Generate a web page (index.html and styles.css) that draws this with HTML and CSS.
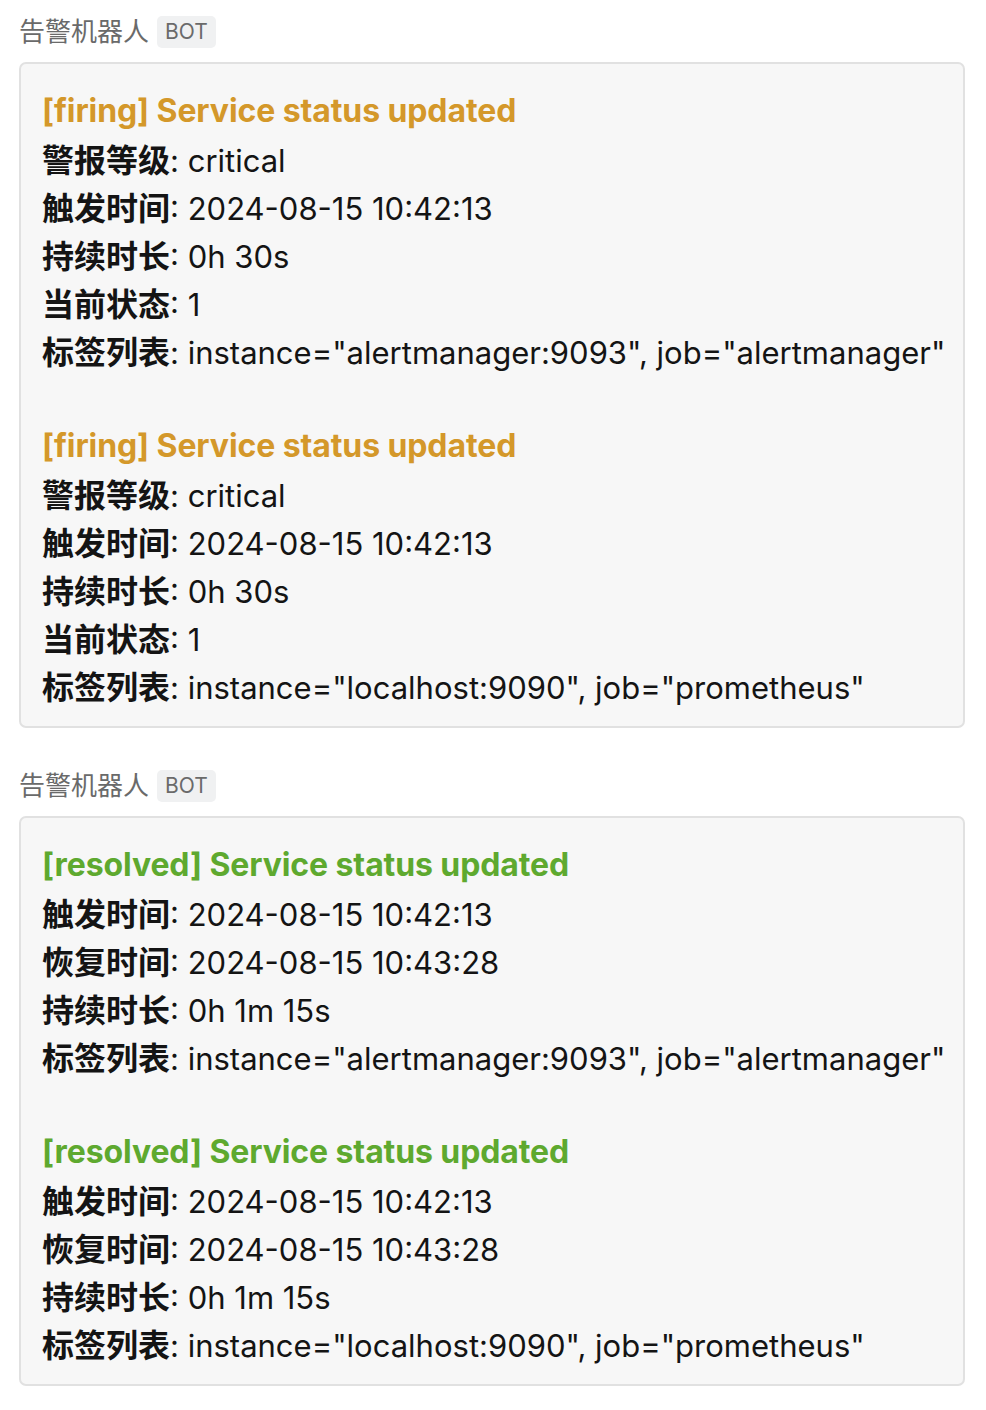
FILE: index.html
```html
<!DOCTYPE html>
<html lang="zh-CN">
<head>
<meta charset="utf-8">
<title>告警机器人</title>
<link rel="stylesheet" href="styles.css">
</head>
<body>
<div class="feed">
  <div class="msg">
    <div class="sender"><span class="name">告警机器人</span><span class="badge">BOT</span></div>
    <div class="card">
      <div class="alert">
        <div class="title firing">[firing] Service status updated</div>
        <div class="line"><b>警报等级</b>: critical</div>
        <div class="line"><b>触发时间</b>: 2024-08-15 10:42:13</div>
        <div class="line"><b>持续时长</b>: 0h 30s</div>
        <div class="line"><b>当前状态</b>: 1</div>
        <div class="line"><b>标签列表</b>: instance="alertmanager:9093", job="alertmanager"</div>
      </div>
      <div class="alert">
        <div class="title firing">[firing] Service status updated</div>
        <div class="line"><b>警报等级</b>: critical</div>
        <div class="line"><b>触发时间</b>: 2024-08-15 10:42:13</div>
        <div class="line"><b>持续时长</b>: 0h 30s</div>
        <div class="line"><b>当前状态</b>: 1</div>
        <div class="line"><b>标签列表</b>: instance="localhost:9090", job="prometheus"</div>
      </div>
    </div>
  </div>
  <div class="msg">
    <div class="sender"><span class="name">告警机器人</span><span class="badge">BOT</span></div>
    <div class="card">
      <div class="alert">
        <div class="title resolved">[resolved] Service status updated</div>
        <div class="line"><b>触发时间</b>: 2024-08-15 10:42:13</div>
        <div class="line"><b>恢复时间</b>: 2024-08-15 10:43:28</div>
        <div class="line"><b>持续时长</b>: 0h 1m 15s</div>
        <div class="line"><b>标签列表</b>: instance="alertmanager:9093", job="alertmanager"</div>
      </div>
      <div class="alert">
        <div class="title resolved">[resolved] Service status updated</div>
        <div class="line"><b>触发时间</b>: 2024-08-15 10:42:13</div>
        <div class="line"><b>恢复时间</b>: 2024-08-15 10:43:28</div>
        <div class="line"><b>持续时长</b>: 0h 1m 15s</div>
        <div class="line"><b>标签列表</b>: instance="localhost:9090", job="prometheus"</div>
      </div>
    </div>
  </div>
</div>
</body>
</html>
```

FILE: styles.css
```css
html, body {
  margin: 0;
  padding: 0;
  background: #ffffff;
}
body {
  font-family: Inter, "Noto Sans CJK SC", sans-serif;
  color: #141414;
}
.feed {
  width: 946px;
  margin-left: 19px;
  padding-top: 16px;
  display: flex;
  flex-direction: column;
  gap: 42px;
}
.sender {
  display: flex;
  align-items: center;
  gap: 8px;
  height: 32px;
  margin-bottom: 14px;
}
.name {
  font-size: 26px;
  color: #6a6a6a;
  line-height: 32px;
}
.badge {
  font-size: 21px;
  color: #6a6a6a;
  background: #f0f1f2;
  border-radius: 5px;
  padding: 0 8px;
  line-height: 32px;
  height: 32px;
}
.card {
  background: #f7f7f7;
  border: 2px solid #e1e1e1;
  border-radius: 7px;
  padding: 23px 20px 14px 21px;
  display: flex;
  flex-direction: column;
  gap: 45px;
}
.title {
  font-size: 32px;
  font-weight: 700;
  line-height: 48px;
  margin-bottom: 2px;
  letter-spacing: -0.1px;
}
.title.firing { color: #d4982a; }
.title.resolved { color: #5ea92f; }
.line {
  font-size: 31px;
  line-height: 48px;
  white-space: nowrap;
}
.line b {
  font-size: 32px;
  font-weight: 700;
}
```
